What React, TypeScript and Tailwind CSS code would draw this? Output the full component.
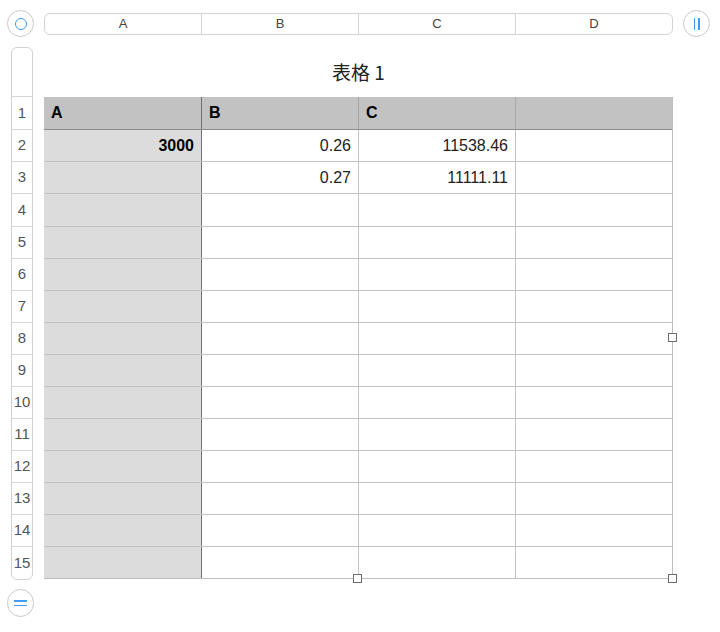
import React from "react";

const COLS = ["A", "B", "C", "D"];
const ROWS = Array.from({ length: 15 }, (_, i) => i + 1);
// column widths including each cell's right border (last one's border is the table's)
const WIDTHS = ["w-[158px]", "w-[157px]", "w-[157px]", "w-[156px]"];

// cell values keyed by row number (1-based), columns A..D
const DATA: Record<number, string[]> = {
  1: ["A", "B", "C", ""],
  2: ["3000", "0.26", "11538.46", ""],
  3: ["", "0.27", "11111.11", ""],
};

// rows are ~32.1px tall in the reference; a few take the extra pixel
const rowH = (r: number) => (r === 1 || r === 4 ? "h-[33px]" : "h-[32px]");

function Handle({ className }: { className: string }) {
  return (
    <div
      className={`absolute h-[9px] w-[9px] border border-[#6d6d6d] bg-white ${className}`}
    />
  );
}

export default function App() {
  return (
    <div
      className="relative h-[632px] w-[720px] overflow-hidden bg-white text-[#333]"
      style={{ fontFamily: '"Liberation Sans", "Noto Sans CJK SC", sans-serif' }}
    >
      {/* top: select-all circle, column letters, pause control */}
      <div className="flex items-center pl-[7px] pt-[10px]">
        <div className="flex h-[27px] w-[27px] items-center justify-center rounded-full border border-[#c9c9c9] bg-white">
          <div className="h-[12px] w-[12px] rounded-full border-[1.5px] border-[#3f9cf5]" />
        </div>
        <div className="ml-[10px] flex h-[22px] w-[629px] overflow-hidden rounded-[6px] border border-[#d2d2d2]">
          {COLS.map((c, i) => (
            <div
              key={c}
              className={`flex flex-1 items-center justify-center text-[13px] text-[#444] ${
                i < 3 ? "border-r border-[#d6d6d6]" : ""
              }`}
            >
              {c}
            </div>
          ))}
        </div>
        <div className="ml-[10px] flex h-[27px] w-[27px] items-center justify-center gap-[3px] rounded-full border border-[#c9c9c9] bg-white">
          <div className="h-[12px] w-[1.5px] bg-[#3f9cf5]" />
          <div className="h-[12px] w-[1.5px] bg-[#3f9cf5]" />
        </div>
      </div>

      {/* body: row numbers + table */}
      <div className="mt-[10px] flex">
        <div className="ml-[11px] flex w-[22px] flex-col overflow-hidden rounded-[6px] border border-[#d2d2d2]">
          <div className="h-[49px] border-b border-[#d6d6d6]" />
          {ROWS.map((r) => (
            <div
              key={r}
              className={`flex items-center justify-center text-[15px] text-[#555] ${rowH(r)} ${
                r < 15 ? "border-b border-[#d6d6d6]" : ""
              }`}
            >
              {r}
            </div>
          ))}
        </div>

        <div className="ml-[11px] flex w-[629px] flex-col">
          <div
            className="flex h-[50px] items-center justify-center pt-[1px] text-[19px] text-[#222]"
            style={{ fontFamily: '"Noto Sans CJK SC", "Liberation Sans", sans-serif' }}
          >
            表格 1
          </div>
          <div className="relative border-b border-r border-[#bdbdbd]">
            {ROWS.map((r) => {
              const vals = DATA[r] ?? ["", "", "", ""];
              const header = r === 1;
              return (
                <div
                  key={r}
                  className={`flex ${
                    header
                      ? "h-[33px] border-b border-[#8c8c8c] bg-[#c1c2c1]"
                      : r < 15
                        ? `${rowH(r)} border-b border-[#c4c4c4]`
                        : "h-[31px]"
                  }`}
                >
                  {vals.map((v, ci) => (
                    <div
                      key={ci}
                      className={`flex ${WIDTHS[ci]} items-center px-[7px] text-[16px] ${
                        header
                          ? "justify-start font-bold text-black"
                          : ci === 0
                            ? "justify-end bg-[#dcdcdc] font-bold text-black"
                            : "justify-end text-[#222]"
                      } ${
                        ci === 0
                          ? "border-r border-[#737373]"
                          : ci < 3
                            ? header
                              ? "border-r border-[#a6a6a6]"
                              : "border-r border-[#c4c4c4]"
                            : ""
                      }`}
                    >
                      {v}
                    </div>
                  ))}
                </div>
              );
            })}
            <Handle className="right-[-5px] top-[236px]" />
            <Handle className="bottom-[-5px] left-[309px]" />
            <Handle className="bottom-[-5px] right-[-5px]" />
          </div>
        </div>
      </div>

      {/* bottom: add-row control */}
      <div className="ml-[7px] mt-[9px] flex h-[28px] w-[27px] flex-col items-center justify-center gap-[3px] rounded-full border border-[#c9c9c9] bg-white">
        <div className="h-[1.5px] w-[13px] bg-[#3f9cf5]" />
        <div className="h-[1.5px] w-[13px] bg-[#3f9cf5]" />
      </div>
    </div>
  );
}
